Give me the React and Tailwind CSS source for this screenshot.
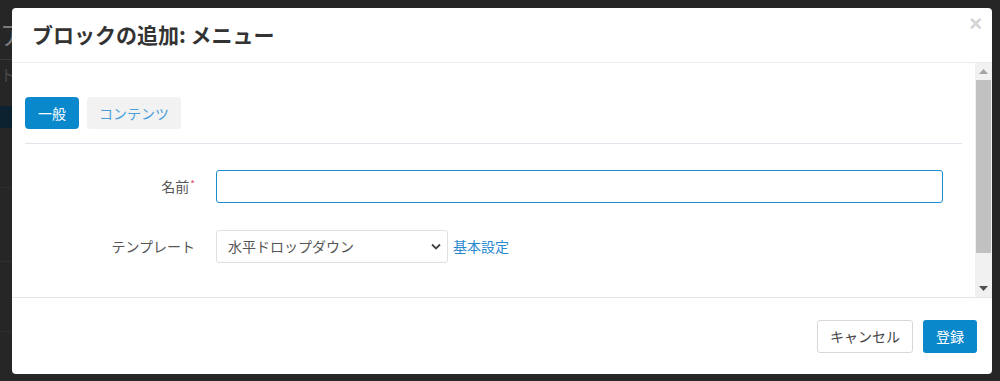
import React from 'react';

const font = { fontFamily: '"Noto Sans CJK JP", "Noto Sans", sans-serif' };

function Scrollbar() {
    return (
        <div className="w-[17px] shrink-0 bg-[#f1f1f1] flex flex-col items-center">
            <div className="h-[17px] w-full flex items-center justify-center">
                <svg width="9" height="5" viewBox="0 0 9 5"><path d="M0 5 L4.5 0 L9 5 Z" fill="#a3a3a3" /></svg>
            </div>
            <div className="h-[173px] w-[15px] bg-[#c1c1c1]" />
            <div className="flex-1" />
            <div className="h-[17px] w-full flex items-center justify-center">
                <svg width="9" height="5" viewBox="0 0 9 5"><path d="M0 0 L4.5 5 L9 0 Z" fill="#505050" /></svg>
            </div>
        </div>
    );
}

export default function App() {
    return (
        <div className="relative h-[381px] w-[1000px] overflow-hidden bg-[#262626]" style={font}>
            {/* Page behind the dim overlay, mostly hidden by the modal */}
            <div className="flex flex-col w-[40px]">
                <div className="h-[60px] border-b border-[#3a3a3a] flex items-center">
                    <span className="text-[26px] text-[#7a7a7a] leading-none mt-[8px]">ア</span>
                </div>
                <div className="h-[46px] text-[16px] text-[#4a4a4a] pt-[2px]">ト</div>
                <div className="h-[22px] bg-[#0d2230]" />
                <div className="h-[60px] border-b border-[#2f2f2f]" />
                <div className="h-[74px] border-b border-[#2f2f2f]" />
                <div className="h-[70px] border-b border-[#2f2f2f]" />
            </div>

            {/* Modal */}
            <div className="absolute left-[12px] top-[8px] w-[980px] h-[366px] bg-white rounded-[4px] flex flex-col overflow-hidden">
                <div className="h-[55px] shrink-0 border-b border-[#ececec] flex items-center justify-between pl-[20px] pr-[10px]">
                    <h3 className="text-[21px] font-bold text-[#333]">ブロックの追加: メニュー</h3>
                    <button className="text-[22px] font-bold text-[#d4d4d4] leading-none -mt-[22px]" style={{ fontFamily: '"Liberation Sans", sans-serif' }}>×</button>
                </div>

                <div className="h-[234px] shrink-0 flex">
                    <div className="flex-1 pl-[13px] pr-[13px] pt-[34px]">
                        <div className="flex gap-[8px]">
                            <button className="h-[32px] w-[54px] rounded-[4px] bg-[#0a88cc] text-white text-[14px]">一般</button>
                            <button className="h-[32px] w-[94px] rounded-[4px] bg-[#f2f2f2] text-[#4ba0da] text-[14px]">コンテンツ</button>
                        </div>
                        <div className="mt-[14px] border-t border-[#e1e5eb]" />

                        <div className="mt-[26px] flex items-center">
                            <label className="w-[175px] pr-[5px] text-right text-[14px] text-[#555]">
                                名前<span className="text-[#e8475a] text-[10px] align-top ml-[1px]">*</span>
                            </label>
                            <input className="ml-[16px] h-[33px] w-[727px] rounded-[3px] border border-[#1a8dd1] outline-none px-[12px]" />
                        </div>

                        <div className="mt-[27px] flex items-center">
                            <label className="w-[175px] pr-[5px] text-right text-[14px] text-[#555]">テンプレート</label>
                            <div className="ml-[16px] h-[33px] w-[232px] rounded-[3px] border border-[#dcdfe4] flex items-center justify-between pl-[11px] pr-[6px] text-[14px] text-[#555]">
                                <span>水平ドロップダウン</span>
                                <svg width="10" height="7" viewBox="0 0 10 7"><path d="M1 1.5 L5 5.5 L9 1.5" stroke="#444" strokeWidth="1.8" fill="none" /></svg>
                            </div>
                            <a className="ml-[5px] text-[14px] text-[#2a8ad0]">基本設定</a>
                        </div>
                    </div>
                    <Scrollbar />
                </div>

                <div className="flex-1 border-t border-[#e5e5e5] flex items-start justify-end gap-[10px] pt-[22px] pr-[15px]">
                    <button className="h-[33px] w-[96px] rounded-[3px] border border-[#d5d9de] bg-white text-[14px] text-[#444]">キャンセル</button>
                    <button className="h-[33px] w-[54px] rounded-[3px] bg-[#0a88cc] text-[14px] text-white">登録</button>
                </div>
            </div>
        </div>
    );
}
